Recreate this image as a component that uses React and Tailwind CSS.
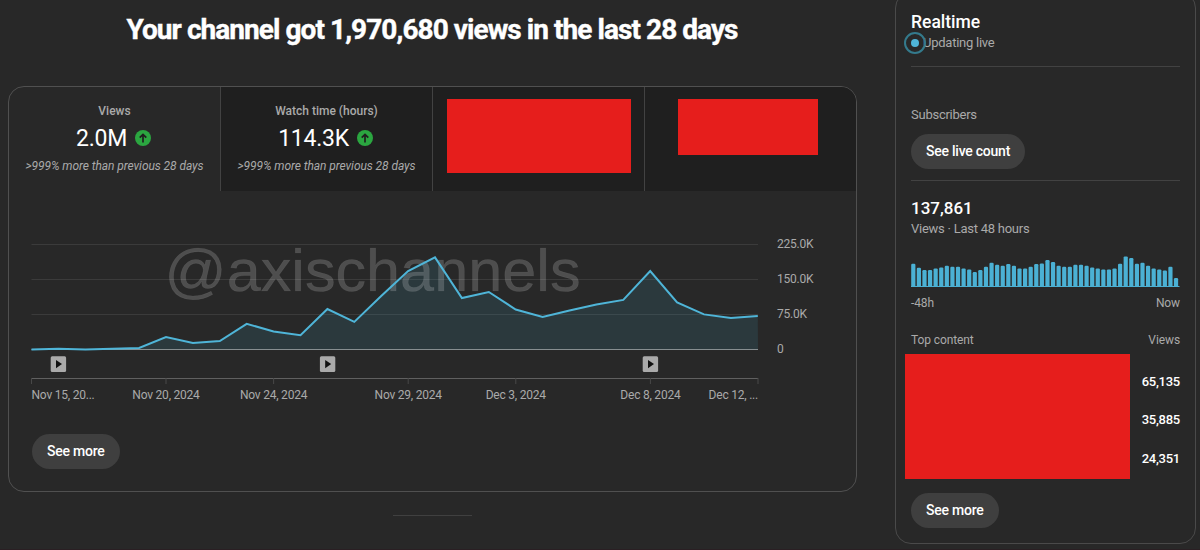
import React from "react";

const views = [
  0, 1.7, 0, 1.7, 3.2, 26.7, 14, 18, 55, 38.5, 30.4, 86.6, 59, 114.4, 168, 197,
  110, 123, 85.6, 69.5, 83.4, 96.3, 106, 168, 100.5, 75, 67.4, 71.7,
];

const hourly = [
  23.3, 19.3, 17, 17, 18.6, 19.6, 21.3, 20.3, 20.3, 18.6, 17.6, 15, 17, 20.3,
  24.3, 22.3, 21.3, 23, 21.3, 18.6, 18.6, 20.3, 23, 23.6, 27, 25, 21.3, 20.3,
  20.3, 22.3, 22.3, 21.3, 19.6, 18.6, 17.6, 17.6, 18.6, 23.3, 30.6, 29, 23.3,
  24.3, 21.3, 18.6, 17.6, 16.6, 20.3, 9,
];

const gridLabels = [
  { y: 9.5, text: "225.0K" },
  { y: 44.5, text: "150.0K" },
  { y: 79.5, text: "75.0K" },
  { y: 114.5, text: "0" },
];

const dateLabels = [
  { x: 0.5, text: "Nov 15, 20...", anchor: "start" },
  { x: 135, text: "Nov 20, 2024", anchor: "middle" },
  { x: 242.6, text: "Nov 24, 2024", anchor: "middle" },
  { x: 377.2, text: "Nov 29, 2024", anchor: "middle" },
  { x: 484.8, text: "Dec 3, 2024", anchor: "middle" },
  { x: 619.4, text: "Dec 8, 2024", anchor: "middle" },
  { x: 727, text: "Dec 12, ...", anchor: "end" },
];

const topViews = ["65,135", "35,885", "24,351"];

const STEP = 26.9;
const BASE = 114.5;
const line = views
  .map((v, i) => `${(0.5 + i * STEP).toFixed(1)},${(BASE - v / 2.139).toFixed(1)}`)
  .join(" ");

function UpArrow() {
  return (
    <svg width="16" height="16" viewBox="0 0 16 16">
      <circle cx="8" cy="8" r="8" fill="#2ba640" />
      <path d="M8 12.4V4.4M4.7 7.7 8 4.4l3.3 3.3" fill="none" stroke="#1f1f1f" strokeWidth="1.7" />
    </svg>
  );
}

function Metric({ label, value, active }) {
  return (
    <div
      className={`flex flex-col items-center pt-4 ${
        active ? "" : "bg-[#1f1f1f] border-l border-[#424242]"
      }`}
    >
      <div className="text-xs leading-4 font-medium text-[#aaaaaa]">{label}</div>
      <div className="mt-1 pr-0.5 flex items-center gap-2 text-[23px] leading-7 tracking-[-0.25px] text-white">
        <span className="pt-0.5">{value}</span>
        <UpArrow />
      </div>
      <div className="mt-[5px] text-xs leading-4 italic tracking-[-0.07px] text-[#aaaaaa] whitespace-nowrap">
        &gt;999% more than previous 28 days
      </div>
    </div>
  );
}

function Pill({ children }) {
  return (
    <button className="h-[35px] px-[15px] rounded-full bg-[#3f3f3f] text-sm font-medium tracking-[-0.24px] text-white pb-0.5">
      {children}
    </button>
  );
}

function ViewsChart() {
  return (
    <svg width="800" height="170" viewBox="0 0 800 170" className="block">
      {gridLabels.slice(0, 3).map((g) => (
        <path key={g.text} d={`M0.5 ${g.y}H727`} stroke="#3b3b3b" />
      ))}
      <path d={`M0.5 ${BASE}H727`} stroke="#8c8c8c" />
      <polygon points={`0.5,${BASE} ${line} 727,${BASE}`} fill="#41b4d9" fillOpacity="0.12" />
      <text
        x="133.5"
        y="55.6"
        fontSize="59"
        textLength="416"
        lengthAdjust="spacingAndGlyphs"
        fill="#ffffff"
        fillOpacity="0.18"
        stroke="#ffffff"
        strokeOpacity="0.06"
        strokeWidth="0.7"
        className="font-['Liberation_Sans',sans-serif]"
      >
        @axischannels
      </text>
      <polyline points={line} fill="none" stroke="#4fb5d8" strokeWidth="2" />
      {gridLabels.map((g) => (
        <text key={g.text} x="746" y={g.y + 3.9} fontSize="12" letterSpacing="-0.25" fill="#aaaaaa">
          {g.text}
        </text>
      ))}
      <path d="M0.5 143.5H727" stroke="#606060" />
      {dateLabels.map((d) => (
        <g key={d.text}>
          <path d={`M${d.x} 143v6`} stroke="#484848" />
          <text
            x={d.x}
            y="163.6"
            fontSize="12"
            letterSpacing="-0.22"
            textAnchor={d.anchor}
            fill="#aaaaaa"
          >
            {d.text}
          </text>
        </g>
      ))}
      {[27.4, 296.6, 619.4].map((x) => (
        <g key={x}>
          <rect x={x - 7.7} y="121.2" width="15.4" height="15.8" rx="1.5" fill="#aaaaaa" />
          <path d={`M${x - 2.4} 125l6 4.1-6 4.1z`} fill="#111111" />
        </g>
      ))}
    </svg>
  );
}

function Realtime() {
  return (
    <aside className="-mt-2 w-[301px] h-[552px] shrink-0 rounded-2xl border border-[#4a4a4a] px-[15px] pt-[19px] text-[13px] tracking-[-0.25px] text-[#aaaaaa]">
      <h2 className="text-[17.5px] leading-5 font-medium tracking-normal text-white">Realtime</h2>
      <div className="flex items-center h-[21px]">
        <span className="relative w-2 h-2 rounded-full bg-[#4fb5d8]">
          <span className="absolute -inset-[7px] rounded-full border-2 border-[#347a8c]" />
        </span>
        <span className="ml-1">Updating live</span>
      </div>
      <div className="mt-[13px] border-t border-[#424242] pt-[38px]">
        <div className="leading-5">Subscribers</div>
        <div className="mt-[9px]">
          <Pill>See live count</Pill>
        </div>
      </div>
      <div className="mt-[11px] border-t border-[#424242] pt-4">
        <div className="text-[17px] leading-[22px] font-medium tracking-normal text-white">137,861</div>
        <div className="leading-5">Views · Last 48 hours</div>
      </div>
      <svg width="269" height="36" viewBox="0 0 269 36" className="mt-[13px] block">
        {hourly.map((h, i) => (
          <rect key={i} x={0.2 + i * 5.59} y={35 - h} width="4.2" height={h} rx="1.2" fill="#4bb1d4" />
        ))}
        <path d="M0 34.5H268.5" stroke="#4bb1d4" />
      </svg>
      <div className="mt-[7px] flex justify-between text-xs leading-4 tracking-[-0.1px]">
        <span>-48h</span>
        <span>Now</span>
      </div>
      <div className="mt-[21px] flex justify-between text-xs leading-4 tracking-[-0.1px]">
        <span>Top content</span>
        <span>Views</span>
      </div>
      <div className="mt-[6px] -ml-[6px] flex justify-between">
        <div className="w-[225px] h-[125px] bg-[#e61e1c]" />
        <div className="pt-2 font-medium text-white">
          {topViews.map((v) => (
            <div key={v} className="h-[38.5px] flex items-center">
              {v}
            </div>
          ))}
        </div>
      </div>
      <div className="mt-[14px]">
        <Pill>See more</Pill>
      </div>
    </aside>
  );
}

export default function App() {
  return (
    <div className="w-[1200px] h-[550px] overflow-hidden bg-[#282828] border-b border-[#2a1f23] flex font-['Roboto',sans-serif]">
      <main className="ml-2 mr-[38px] w-[849px] shrink-0">
        <h1 className="h-[86px] pt-3 pr-px text-center text-[28px] leading-9 font-bold tracking-[-0.94px] text-white [-webkit-text-stroke:0.4px_white]">
          Your channel got 1,970,680 views in the last 28 days
        </h1>
        <section className="h-[406px] rounded-2xl border border-[#505050] overflow-hidden">
          <div className="grid grid-cols-[211px_212px_212px_1fr] h-[104px]">
            <Metric label="Views" value="2.0M" active />
            <Metric label="Watch time (hours)" value="114.3K" />
            <div className="bg-[#1f1f1f] border-l border-[#424242] pt-3 pl-[14px]">
              <div className="w-[184px] h-[74px] bg-[#e61e1c]" />
            </div>
            <div className="bg-[#1f1f1f] border-l border-[#424242] pt-3 pl-[33px]">
              <div className="w-[140px] h-14 bg-[#e61e1c]" />
            </div>
          </div>
          <div className="pt-11 pl-[22px]">
            <ViewsChart />
          </div>
          <div className="mt-[29px] pl-[23px]">
            <Pill>See more</Pill>
          </div>
        </section>
        <div className="mt-[23px] ml-[385px] w-[79px] h-px bg-[#404040]" />
      </main>
      <Realtime />
    </div>
  );
}
